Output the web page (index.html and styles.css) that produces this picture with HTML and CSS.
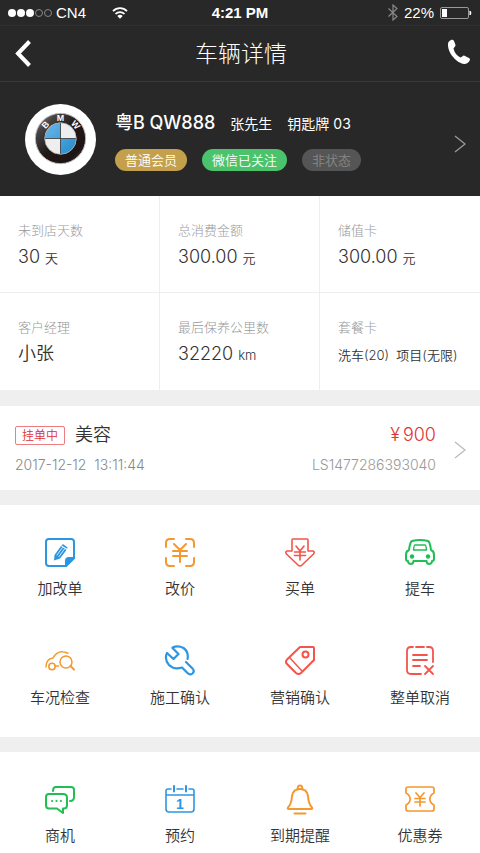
FILE: index.html
```html
<!DOCTYPE html>
<html lang="zh-CN">
<head>
  <meta charset="UTF-8">
  <meta name="viewport" content="width=device-width, initial-scale=1.0">
  <title>车辆详情</title>
  <link rel="stylesheet" href="styles.css">
</head>
<body>

<header class="header">
  <div class="status-bar">
    <div class="status-left">
      <svg width="44" height="10" viewBox="0 0 44 10">
        <g fill="#fff"><circle cx="4" cy="5" r="4"/><circle cx="13" cy="5" r="4"/><circle cx="22" cy="5" r="4"/></g>
        <g fill="none" stroke="#888"><circle cx="31" cy="5" r="3.5"/><circle cx="40" cy="5" r="3.5"/></g>
      </svg>
      <span>CN4</span>
      <svg class="wifi" width="16" height="12" viewBox="0 0 16 12" fill="none" stroke="#fff" stroke-width="1.8">
        <path d="M1 4.2C5 .2 11 .2 15 4.2M3.5 7C6 4.4 10 4.4 12.500 7"/>
        <path d="M5.300 9C7 7.400 9 7.400 10.700 9L8 11.800Z" fill="#fff" stroke="none"/>
      </svg>
    </div>
    <b class="time">4:21 PM</b>
    <div class="status-right">
      <svg width="10" height="17" viewBox="0 0 10 17" fill="none" stroke="#888" stroke-width="1.2">
        <path d="M.5 4.500L9 12.500L5 16V1L9 4.500L.5 12.500"/>
      </svg>
      <span>22%</span>
      <svg width="32" height="12" viewBox="0 0 32 12">
        <rect x=".5" y=".5" width="28" height="11" rx="1.500" fill="none" stroke="#999"/>
        <rect x="2" y="2" width="5" height="8" fill="#fff"/>
        <path d="M30 4Q32 6 30 8Z" fill="#fff" stroke="#fff"/>
      </svg>
    </div>
  </div>

  <div class="title-bar">
    <button class="back" type="button" aria-label="返回">
      <svg width="16" height="27" viewBox="0 0 16 27" fill="none" stroke="#fff" stroke-width="4"><path d="M14.500 1.500L3 13.500L14.500 25.500"/></svg>
    </button>
    <h1>车辆详情</h1>
    <a class="phone" href="tel:" aria-label="电话">
      <svg width="24" height="26" viewBox="0 0 24 26" fill="#fff">
        <path d="M2 2.500C4 .5 6 .3 7 2L8.500 6C8.800 7.300 7 8.300 6.500 9.500C7.300 13.500 10 17 13.500 18.500C15 18.300 15.500 16.500 17 16.500L22 19C24 20.200 22.500 22.500 20.500 24C17.500 26 13 24.500 9 21C4.500 17 1.500 12 1 7C.9 5 1 3.500 2 2.500Z"/>
      </svg>
    </a>
  </div>
</header>

<main>
  <a class="profile" href="#">
    <svg class="avatar" viewBox="0 0 72 72">
      <defs>
        <linearGradient id="ring" x1="0" y1="0" x2="1" y2="1">
          <stop offset="0" stop-color="#999"/><stop offset=".22" stop-color="#454242"/><stop offset=".5" stop-color="#211817"/><stop offset=".8" stop-color="#1d1413"/><stop offset="1" stop-color="#666"/>
        </linearGradient>
        <linearGradient id="blue" x1="0" y1="0" x2="1" y2="1"><stop offset="0" stop-color="#69b8e8"/><stop offset="1" stop-color="#248acb"/></linearGradient>
      </defs>
      <circle cx="36" cy="36" r="36" fill="#fff"/>
      <circle cx="36" cy="35" r="25.500" fill="url(#ring)" stroke="#bbb"/>
      <circle cx="36" cy="35" r="16" fill="#eee"/>
      <path d="M36 35V19A16 16 0 0 0 20 35ZM36 35V51A16 16 0 0 0 52 35Z" fill="url(#blue)"/>
      <path d="M36 19V51M20 35H52" stroke="#333" stroke-width=".8"/>
      <circle cx="36" cy="35" r="16" fill="none" stroke="#aaa" stroke-width=".8"/>
      <g class="logo-text" fill="#fff" text-anchor="middle">
        <text x="36" y="17.500">M</text>
        <text x="36" y="17.500" transform="rotate(-48 36 35)">B</text>
        <text x="36" y="17.500" transform="rotate(48 36 35)">W</text>
      </g>
    </svg>
    <div class="info">
      <div class="name-row">
        <strong>粤B QW888</strong>
        <span>张先生</span>
        <span>钥匙牌 03</span>
      </div>
      <div class="tags">
        <span class="tag gold">普通会员</span>
        <span class="tag green">微信已关注</span>
        <span class="tag gray">非状态</span>
      </div>
    </div>
    <svg class="arrow" viewBox="0 0 12 18"><path d="M1 1L11 9L1 17"/></svg>
  </a>

  <dl class="stats">
    <div class="cell"><dt>未到店天数</dt><dd>30 <small>天</small></dd></div>
    <div class="cell"><dt>总消费金额</dt><dd>300.00 <small>元</small></dd></div>
    <div class="cell"><dt>储值卡</dt><dd>300.00 <small>元</small></dd></div>
    <div class="cell"><dt>客户经理</dt><dd>小张</dd></div>
    <div class="cell"><dt>最后保养公里数</dt><dd>32220 <small>km</small></dd></div>
    <div class="cell"><dt>套餐卡</dt><dd><small>洗车(20)&nbsp; 项目(无限)</small></dd></div>
  </dl>

  <a class="order" href="#">
    <div class="order-body">
      <div class="order-row">
        <span class="state">挂单中</span>
        <span class="service">美容</span>
        <span class="price"><span>¥</span><span>900</span></span>
      </div>
      <div class="order-row meta">
        <time>2017-12-12&nbsp; 13:11:44</time>
        <span class="number">LS1477286393040</span>
      </div>
    </div>
    <svg class="arrow" viewBox="0 0 12 18"><path d="M1 1L11 9L1 17"/></svg>
  </a>

  <nav class="menu">
    <a class="item blue" href="#">
      <svg viewBox="0 0 32 32">
        <path d="M22 30H5Q2 30 2 27V6Q2 3 5 3H27Q30 3 30 6V22Z"/>
        <path d="M22 30V25Q22 22 25 22H30Z" fill="currentColor"/>
        <path d="M10.500 19L17 10L22.500 14L16 22.500L10 24.500ZM18 8.800Q19 8 20 8.700L23 11Q24 11.800 23.200 12.800L17.500 9.500Z" fill="currentColor" stroke="none"/>
        <path d="M13 19L18.500 11.500M15 20.500L20.500 13" stroke="#fff" stroke-width=".8"/>
      </svg>
      <span>加改单</span>
    </a>
    <a class="item orange" href="#">
      <svg viewBox="0 0 32 32">
        <path d="M2 11V7Q2 3 6 3H10M22 3H26Q30 3 30 7V11M30 22V26Q30 30 26 30H22M10 30H6Q2 30 2 26V22"/>
        <path d="M10 8L16 14L22 8M9 15H23M9 20H23M16 14V26"/>
      </svg>
      <span>改价</span>
    </a>
    <a class="item red" href="#">
      <svg viewBox="0 0 32 32" stroke-width="1.600">
        <path d="M9 3H23Q24 3 24 4V15H29Q31 16 29.500 18L18 29Q16 31 14 29L2.500 18Q1 16 3 15H8V4Q8 3 9 3Z"/>
        <path d="M12 10L16 15L20 10M10.500 16H21.500M10.500 19.500H21.500M16 15V24"/>
      </svg>
      <span>买单</span>
    </a>
    <a class="item green-icon" href="#">
      <svg viewBox="0 0 32 32">
        <path d="M8 5Q16 3 24 5Q26 6 27 14Q30 15 30 19V23Q30 25 28 25V26Q27 28 25 28Q23 28 22.500 25H9.500Q9 28 7 28Q5 28 4 26V25Q2 25 2 23V19Q2 15 5 14Q6 6 8 5Z"/>
        <path d="M11 9H21Q22 9 22.500 14H9.500Q10 9 11 9Z" stroke-width="1.500"/>
        <circle cx="8" cy="20.500" r="2.200" fill="currentColor" stroke="none"/><circle cx="24" cy="20.500" r="2.200" fill="currentColor" stroke="none"/>
      </svg>
      <span>提车</span>
    </a>
    <a class="item orange" href="#">
      <svg viewBox="0 0 32 32" stroke-width="1.500">
        <path d="M2 22Q2 14 9 13Q13 6 19 6.800Q21 7 24 8.200M11 21H14.500"/>
        <circle cx="8" cy="21.500" r="3.200"/><circle cx="22" cy="17" r="6"/><path d="M26.500 21L30 24.500" stroke-width="2"/>
      </svg>
      <span>车况检查</span>
    </a>
    <a class="item blue" href="#">
      <svg viewBox="0 0 32 32" stroke-width="2.200">
        <path d="M8.500 2.500Q14 0 19.500 3Q25 7 23.500 14M22 17L28.500 23.500Q31 26 28.500 28.500Q26 30.500 23.500 28L18 22.500Q10 25 5 20Q0 14 3 8L9.500 14L14.500 9L8.500 3"/>
      </svg>
      <span>施工确认</span>
    </a>
    <a class="item red" href="#">
      <svg viewBox="0 0 32 32">
        <path d="M16 2H29Q30 2 30 3V15L17 28Q14.500 30 12 28L3 19Q1 17 3 14.500Z"/>
        <path d="M6 13L17.500 25.500" stroke-width="1.500"/><circle cx="21.500" cy="9.500" r="3"/>
      </svg>
      <span>营销确认</span>
    </a>
    <a class="item red" href="#">
      <svg viewBox="0 0 32 32" stroke-width="1.800">
        <path d="M9 2H7Q3 2 3 6V25Q3 29 7 29H17M12 2H20M23 2H25Q29 2 29 6V17M9 10H23M9 15H23M9 21H16"/>
        <path d="M21 21L29 29M29 21L21 29"/>
      </svg>
      <span>整单取消</span>
    </a>
  </nav>

  <nav class="menu">
    <a class="item green-icon" href="#">
      <svg viewBox="0 0 32 32">
        <path d="M5 11H19Q23 11 23 15V22Q23 25.500 20 25.500H19V30L13 25.500H5Q2 25.500 2 22V14Q2 11 5 11ZM9 8Q9 4 12 4H27Q30 4 30 7V14Q30 18 26 18"/>
        <path d="M8 18H8.200M12.400 18H12.600M16.800 18H17"/>
      </svg>
      <span>商机</span>
    </a>
    <a class="item blue" href="#">
      <svg viewBox="0 0 32 32" stroke-width="1.600">
        <path d="M7 6H4Q2 6 2 8V26Q2 29 5 29H27Q30 29 30 26V8Q30 6 28 6H25M13 6H19M2 12H30"/>
        <path d="M10 3V8.500M22 3V8.500" stroke-width="2"/>
        <text class="day" x="16" y="25.500" text-anchor="middle" fill="currentColor" stroke="none">1</text>
      </svg>
      <span>预约</span>
    </a>
    <a class="item orange" href="#">
      <svg viewBox="0 0 32 32">
        <path d="M16 6Q23 6 24 13Q24.500 21 28 24.500Q29 26 27 26H5Q3 26 4 24.500Q7.500 21 8 13Q9 6 16 6Z"/>
        <path d="M13.800 6V4.500Q14 2.500 16 2.500Q18 2.500 18.200 4.500V6M10.500 30.500H21.500"/>
      </svg>
      <span>到期提醒</span>
    </a>
    <a class="item orange" href="#">
      <svg viewBox="0 0 32 32" stroke-width="1.700">
        <path d="M4 4H28Q30 4 30 6V10C24.500 13 24.500 19 30 22V26Q30 28 28 28H4Q2 28 2 26V22C7.500 19 7.500 13 2 10V6Q2 4 4 4Z"/>
        <path d="M12 10L16 14.500L20 10M11 15.500H21M11 19H21M16 14.500V23"/>
      </svg>
      <span>优惠券</span>
    </a>
  </nav>
</main>

</body>
</html>
```

FILE: styles.css
```css
* {
  box-sizing: border-box;
}

body {
  margin: 0;
  font-family: Inter, "Noto Sans CJK SC", sans-serif;
  font-weight: 350;
  color: #333;
  background-color: #efefef;
}

a {
  color: inherit;
  text-decoration: none;
}

svg {
  display: block;
  flex-shrink: 0;
}

.header {
  color: #fff;
  background-color: #282828;
}

.status-bar {
  display: grid;
  grid-template-columns: 1fr auto 1fr;
  align-items: center;
  height: 26px;
  padding: 0 8px;
  border-bottom: 1px solid #303030;
  font-family: "Liberation Sans", Arial, sans-serif;
  font-size: 15px;
}

.status-left,
.status-right {
  display: flex;
  align-items: center;
  gap: 4px;
}

.status-right {
  justify-content: flex-end;
  gap: 6px;
}

.wifi {
  margin-left: 22px;
}

.title-bar {
  display: flex;
  align-items: center;
  justify-content: space-between;
  height: 56px;
  padding: 0 9px 0 15px;
  border-bottom: 1px solid #383838;
}

.title-bar h1 {
  margin: 0;
  font-size: 23px;
  font-weight: 300;
  line-height: 32px;
}

.back {
  width: 20px;
  padding: 0;
  border: none;
  background: none;
  cursor: pointer;
}

.phone {
  padding-bottom: 4px;
}

.profile {
  display: flex;
  align-items: center;
  height: 114px;
  padding: 0 14px 0 25px;
  color: #fff;
  background-color: #282828;
}

.avatar {
  width: 71px;
  height: 71px;
}

.logo-text {
  font: bold 9px "Liberation Sans", Arial, sans-serif;
}

.info {
  flex: 1;
  margin-left: 19px;
  padding-top: 3px;
}

.name-row {
  display: flex;
  align-items: baseline;
  gap: 15px;
  line-height: 26px;
  font-size: 14px;
  font-weight: 400;
}

.name-row strong {
  font-size: 18px;
  font-weight: 500;
}

.tags {
  display: flex;
  gap: 15px;
  margin-top: 12px;
}

.tag {
  padding: 0 10px;
  border-radius: 11px;
  font-size: 13px;
  line-height: 22px;
}

.gold {
  background-color: #c5a04c;
}

.green {
  background-color: #4ac36c;
}

.gray {
  color: #888;
  background-color: #555;
}

.arrow {
  width: 12px;
  height: 18px;
  fill: none;
  stroke: #999;
  stroke-width: 1.3;
}

.profile .arrow {
  margin-top: 10px;
}

.stats {
  display: grid;
  grid-template-columns: repeat(3, 1fr);
  margin: 0 0 16px;
  background-color: #fff;
}

.cell {
  height: 97px;
  padding: 23px 0 0 18px;
  border-right: 1px solid #eee;
  border-bottom: 1px solid #eee;
  white-space: nowrap;
}

.cell:nth-child(3n) {
  border-right: none;
}

.cell:nth-child(n+4) {
  border-bottom: none;
}

.cell dt {
  color: #999;
  font-size: 13px;
  font-weight: 300;
  line-height: 22px;
}

.cell dd {
  margin: 2px 0 0;
  font-size: 18px;
  line-height: 28px;
}

.cell small {
  font-size: 13px;
}

.order {
  display: flex;
  align-items: center;
  height: 84px;
  margin-bottom: 15px;
  padding: 4px 14px 0 15px;
  background-color: #fff;
}

.order-body {
  flex: 1;
  margin-right: 18px;
}

.order-row {
  display: flex;
  align-items: center;
  line-height: 30px;
}

.state {
  padding: 0 6px;
  border: 1px solid #ee7c80;
  border-radius: 2px;
  color: #dd3038;
  font-size: 12px;
  line-height: 17px;
}

.service {
  margin-left: 10px;
  font-size: 18px;
}

.price {
  display: flex;
  gap: 3px;
  margin-left: auto;
  color: #e5312f;
  font-size: 18px;
}

.meta {
  justify-content: space-between;
  color: #888;
  font-size: 14px;
  font-weight: 300;
}

.number {
  color: #999;
}

.order .arrow {
  stroke: #bbb;
}

.menu {
  display: grid;
  grid-template-columns: repeat(4, 1fr);
  row-gap: 44px;
  margin-bottom: 15px;
  padding: 31px 0 27px;
  background-color: #fff;
}

.item {
  display: flex;
  flex-direction: column;
  align-items: center;
  gap: 9px;
}

.item svg {
  width: 32px;
  height: 32px;
  fill: none;
  stroke: currentColor;
  stroke-linecap: round;
  stroke-linejoin: round;
}

.item svg:not([stroke-width]) {
  stroke-width: 2;
}

.item span {
  color: #333;
  font-size: 15px;
  line-height: 24px;
}

.day {
  font: bold 14px "Liberation Sans", Arial, sans-serif;
}

.blue {
  color: #2d96e2;
}

.orange {
  color: #f4982f;
}

.red {
  color: #f2554c;
}

.green-icon {
  color: #21bd55;
}
```
